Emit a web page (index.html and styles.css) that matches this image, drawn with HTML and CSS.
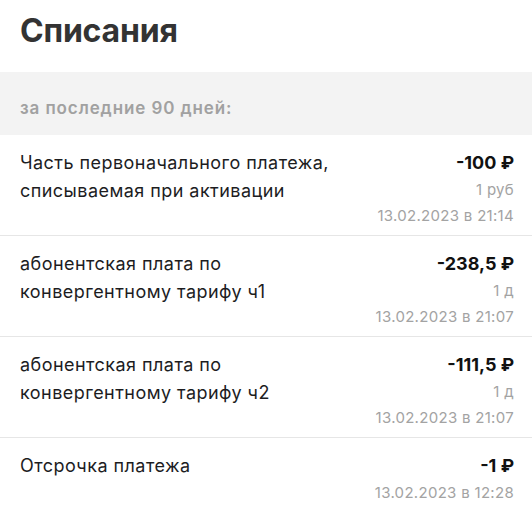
FILE: index.html
```html
<!DOCTYPE html>
<html lang="ru">
<head>
<meta charset="utf-8">
<link rel="stylesheet" href="styles.css">
</head>
<body>
<header class="header">
  <h1 class="title">Списания</h1>
</header>
<div class="period">за последние 90 дней:</div>
<ul class="list">
  <li class="row">
    <div class="desc">Часть первоначального платежа, списываемая при активации</div>
    <div class="meta">
      <div class="amount">-100 ₽</div>
      <div class="sub">1 руб</div>
      <div class="sub">13.02.2023 в 21:14</div>
    </div>
  </li>
  <li class="row">
    <div class="desc">абонентская плата по<br>конвергентному тарифу ч1</div>
    <div class="meta">
      <div class="amount">-238,5 ₽</div>
      <div class="sub">1 д</div>
      <div class="sub">13.02.2023 в 21:07</div>
    </div>
  </li>
  <li class="row">
    <div class="desc">абонентская плата по<br>конвергентному тарифу ч2</div>
    <div class="meta">
      <div class="amount">-111,5 ₽</div>
      <div class="sub">1 д</div>
      <div class="sub">13.02.2023 в 21:07</div>
    </div>
  </li>
  <li class="row">
    <div class="desc">Отсрочка платежа</div>
    <div class="meta">
      <div class="amount">-1 ₽</div>
      <div class="sub">13.02.2023 в 12:28</div>
    </div>
  </li>
</ul>
</body>
</html>
```
FILE: styles.css
```css
* { box-sizing: border-box; }
html, body {
  margin: 0;
  padding: 0;
  background: #ffffff;
  font-family: Inter, "Noto Sans", sans-serif;
  color: #1d1d1f;
}
.header {
  height: 72px;
  padding: 11px 20px 0;
}
.title {
  margin: 0;
  font-size: 32px;
  line-height: 40px;
  font-weight: 700;
  color: #333333;
  letter-spacing: -0.2px;
}
.period {
  background: #f3f3f3;
  height: 63px;
  padding: 23px 20px 0;
  font-size: 17px;
  line-height: 26px;
  font-weight: 600;
  letter-spacing: 0.9px;
  color: #a1a1a1;
}
.list {
  list-style: none;
  margin: 0;
  padding: 0;
}
.row {
  display: flex;
  justify-content: space-between;
  gap: 16px;
  padding: 14px 18px 6px 20px;
  border-bottom: 1px solid #e6e6e6;
}
.row:last-child { border-bottom: none; }
.desc {
  font-size: 18px;
  line-height: 28px;
  letter-spacing: 0.45px;
  color: #1d1d1f;
  max-width: 330px;
}
.meta {
  text-align: right;
  white-space: nowrap;
}
.amount {
  font-size: 18px;
  line-height: 28px;
  font-weight: 700;
  color: #111111;
}
.sub {
  font-size: 15px;
  line-height: 26px;
  letter-spacing: 0.3px;
  color: #a3a3a3;
}
```
